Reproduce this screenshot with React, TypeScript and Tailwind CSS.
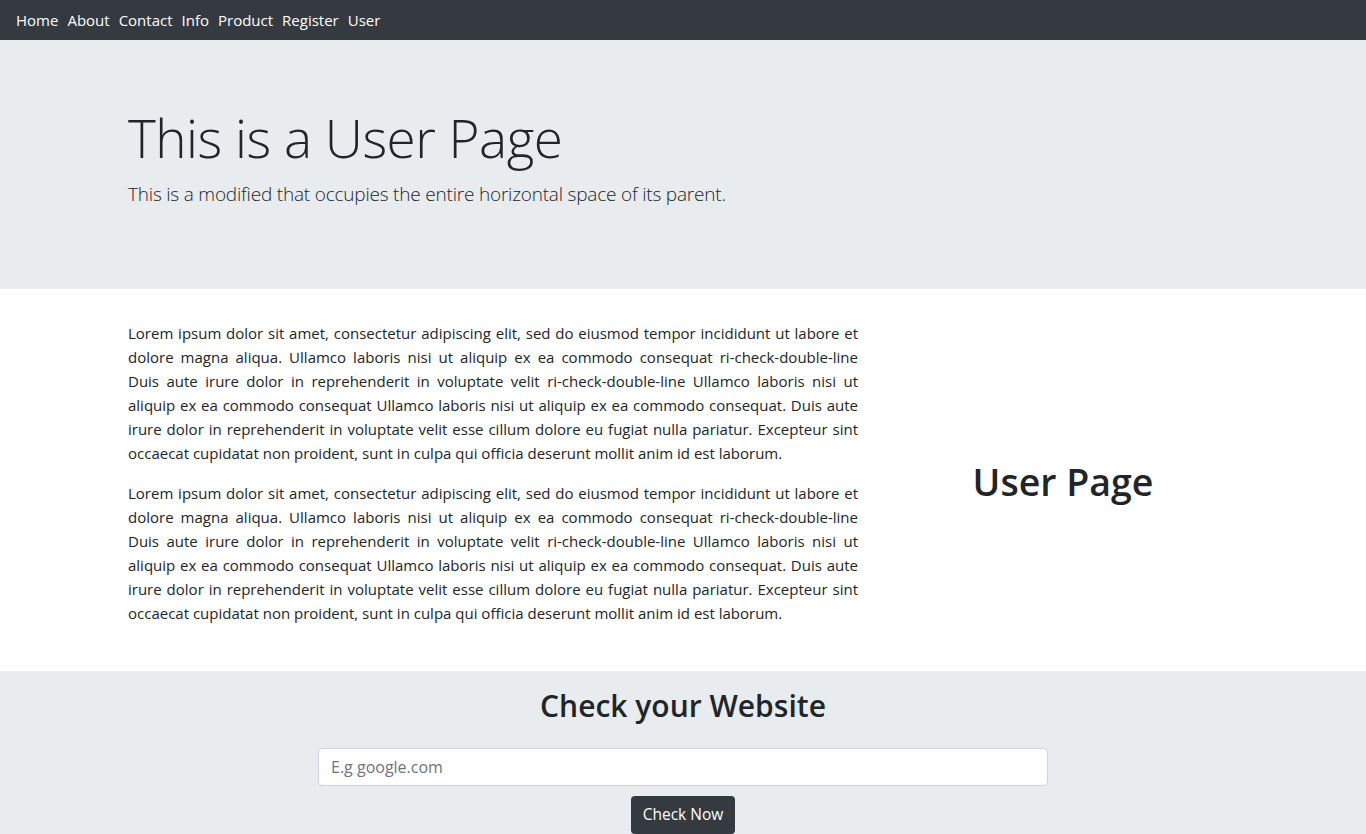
import React from "react";

const lines = [
  "Lorem ipsum dolor sit amet, consectetur adipiscing elit, sed do eiusmod tempor incididunt ut labore et",
  "dolore magna aliqua. Ullamco laboris nisi ut aliquip ex ea commodo consequat ri-check-double-line",
  "Duis aute irure dolor in reprehenderit in voluptate velit ri-check-double-line Ullamco laboris nisi ut",
  "aliquip ex ea commodo consequat Ullamco laboris nisi ut aliquip ex ea commodo consequat. Duis aute",
  "irure dolor in reprehenderit in voluptate velit esse cillum dolore eu fugiat nulla pariatur. Excepteur sint",
  "occaecat cupidatat non proident, sunt in culpa qui officia deserunt mollit anim id est laborum.",
];

function Para() {
  return (
    <p className="mb-4 text-[15px] leading-[24px] text-[#212529]">
      {lines.map((l, i) =>
        i < lines.length - 1 ? (
          <span key={i} className="block text-justify [text-align-last:justify] whitespace-nowrap">
            {l}
          </span>
        ) : (
          <span key={i} className="block">
            {l}
          </span>
        )
      )}
    </p>
  );
}

export default function App() {
  const links = ["Home", "About", "Contact", "Info", "Product", "Register", "User"];
  return (
    <div className="min-h-[834px] bg-white font-['Open_Sans',sans-serif] text-[#212529]">
      <nav className="flex h-10 items-center gap-[9px] bg-[#343a40] px-4">
        {links.map((l) => (
          <a key={l} className="text-[15px] leading-[24px] text-white">
            {l}
          </a>
        ))}
      </nav>
      <div className="bg-[#e9ecef] py-16">
        <div className="mx-auto max-w-[1140px] px-[15px]">
          <h1 className="mb-2 text-[53px] font-light leading-[67px] tracking-[-0.5px] text-[#212529]">
            This is a User Page
          </h1>
          <p className="mb-4 text-[19px] font-light leading-[30px] tracking-[-0.2px] text-[#212529]">
            This is a modified that occupies the entire horizontal space of its parent.
          </p>
        </div>
      </div>
      <div className="mx-auto mt-8 flex max-w-[1140px] px-[15px] pb-[30px]">
        <div className="w-[730px] shrink-0">
          <Para />
          <Para />
        </div>
        <div className="ml-[30px] flex flex-1 items-center justify-center">
          <h2 className="text-[37.5px] font-semibold leading-[45px] text-[#212529]">User Page</h2>
        </div>
      </div>
      <div className="flex flex-col items-center bg-[#e9ecef] pt-4 pb-8">
        <h2 className="text-[30px] font-semibold leading-[38px] text-[#212529]">Check your Website</h2>
        <input
          className="mt-[23px] h-[38px] w-[730px] rounded-[4px] border border-[#ced4da] bg-white px-3 text-[16px] text-[#495057] placeholder:text-[#6c757d] outline-none"
          placeholder="E.g google.com"
        />
        <button className="mt-[10px] h-[38px] rounded-[4px] bg-[#343a40] px-[12px] text-[15.5px] text-white">
          Check Now
        </button>
      </div>
    </div>
  );
}
